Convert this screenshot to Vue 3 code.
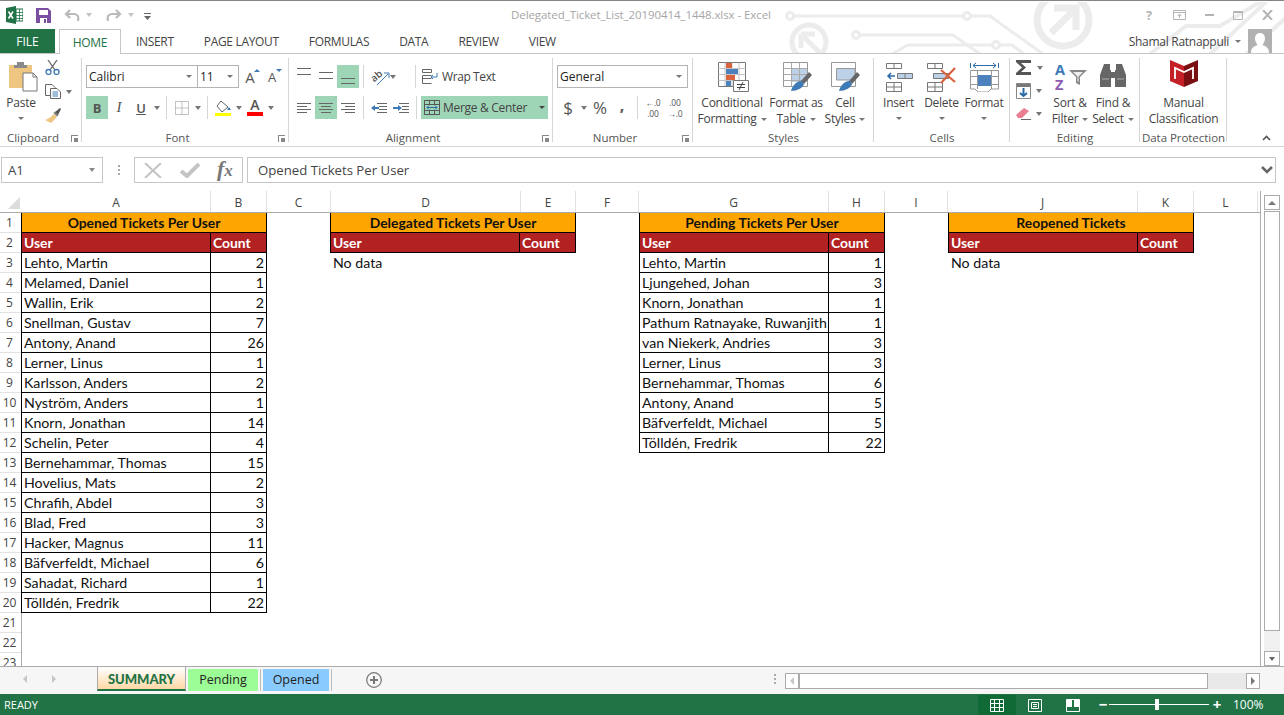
<script setup>
const tabs = ['INSERT', 'PAGE LAYOUT', 'FORMULAS', 'DATA', 'REVIEW', 'VIEW']
const columns = [
  ['A', 189], ['B', 56], ['C', 64], ['D', 190], ['E', 55], ['F', 63],
  ['G', 190], ['H', 56], ['I', 63], ['J', 190], ['K', 56], ['L', 64],
]
const rowNums = Array.from({ length: 23 }, (_, i) => i + 1)

// les quatre tableaux de la feuille
const tables = [
  {
    title: 'Opened Tickets Per User',
    rows: [
      ['Lehto, Martin', 2], ['Melamed, Daniel', 1], ['Wallin, Erik', 2], ['Snellman, Gustav', 7],
      ['Antony, Anand', 26], ['Lerner, Linus', 1], ['Karlsson, Anders', 2], ['Nyström, Anders', 1],
      ['Knorn, Jonathan', 14], ['Schelin, Peter', 4], ['Bernehammar, Thomas', 15], ['Hovelius, Mats', 2],
      ['Chrafih, Abdel', 3], ['Blad, Fred', 3], ['Hacker, Magnus', 11], ['Bäfverfeldt, Michael', 6],
      ['Sahadat, Richard', 1], ['Tölldén, Fredrik', 22],
    ],
  },
  { title: 'Delegated Tickets Per User', rows: [] },
  {
    title: 'Pending Tickets Per User',
    rows: [
      ['Lehto, Martin', 1], ['Ljungehed, Johan', 3], ['Knorn, Jonathan', 1],
      ['Pathum Ratnayake, Ruwanjith', 1], ['van Niekerk, Andries', 3], ['Lerner, Linus', 3],
      ['Bernehammar, Thomas', 6], ['Antony, Anand', 5], ['Bäfverfeldt, Michael', 5], ['Tölldén, Fredrik', 22],
    ],
  },
  { title: 'Reopened Tickets', rows: [] },
]
</script>

<template>
  <div class="excel">
    <header class="titlebar">
      <svg class="circuit" width="504" height="52" viewBox="780 2 504 52" fill="none" stroke="#ececec" stroke-width="3">
        <circle cx="790" cy="16" r="3.5" />
        <path d="M794 16H963M971 16H990L1043 54" />
        <circle cx="967" cy="16" r="3.5" />
        <circle cx="809" cy="42" r="17" stroke-width="5" />
        <path d="M801 34H815M801 34V48M801 34L820 53" stroke-width="5" />
        <circle cx="856" cy="35" r="3.5" />
        <path d="M860 35H953L980 54" />
        <path d="M892 54L908 45H992M1000 45H1012L1024 54" />
        <circle cx="996" cy="45" r="3.5" />
        <circle cx="1063" cy="20" r="26" stroke-width="7" />
        <path d="M1054 8H1076V30M1076 8L1051 33" stroke-width="7" />
        <path d="M1150 54L1186 26H1220L1270 -4M1210 54L1266 2M1246 54L1290 14" stroke-width="4" />
      </svg>
      <div class="qat">
        <svg width="17" height="18" viewBox="0 0 17 18">
          <path d="M0 2L10 0V18L0 16Z" fill="#217346" />
          <path d="M10 3H17V15H10Z" fill="#fff" stroke="#217346" />
          <path d="M10 6.5H17M10 9.5H17M10 12.5H17M13.5 3V15" stroke="#217346" stroke-width=".8" />
          <path d="M2.5 5.5L7 12.5M7 5.5L2.5 12.5" stroke="#fff" stroke-width="1.6" />
        </svg>
        <svg class="save" width="15" height="15" viewBox="0 0 15 15">
          <path d="M0 0H12L15 3V15H0Z" fill="#7a4ea0" />
          <path d="M3 2H12V7H3Z" fill="#fff" />
          <path d="M4 10H11V15H4Z" fill="#fff" />
          <path d="M8 11H10V15H8Z" fill="#7a4ea0" />
        </svg>
        <svg class="undo" width="16" height="13" viewBox="0 0 16 13" fill="none" stroke="#b9b9b9" stroke-width="2.2">
          <path d="M6 1L2 5L6 9M2 5H10C14 5 15 8 14 12" />
        </svg>
        <i class="caret light"></i>
        <svg class="redo" width="16" height="13" viewBox="0 0 16 13" fill="none" stroke="#b9b9b9" stroke-width="2.2">
          <path d="M10 1L14 5L10 9M14 5H6C2 5 1 8 2 12" />
        </svg>
        <i class="caret light"></i>
        <svg class="custom" width="7" height="7" viewBox="0 0 7 7"><path d="M0 0H7V1H0ZM0 3H7L3.5 7Z" fill="#666" /></svg>
      </div>
      <div class="doc-title">Delegated_Ticket_List_20190414_1448.xlsx - Excel</div>
      <div class="win-controls">
        <span class="help">?</span>
        <svg width="13" height="10" viewBox="0 0 13 10" fill="none" stroke="#b4b4b4"><path d="M.5.5H12.5V9.5H.5ZM.5 2.5H12.5M6.5 8V4M4.5 6L6.5 4L8.5 6" /></svg>
        <svg class="mini" width="9" height="2" viewBox="0 0 9 2"><path d="M0 0H9V2H0Z" fill="#b4b4b4" /></svg>
        <svg width="10" height="9" viewBox="0 0 10 9" fill="none" stroke="#b4b4b4"><path d="M.5.5H9.5V8.5H.5ZM.5 1.5H9.5" /></svg>
        <svg width="11" height="10" viewBox="0 0 11 10" stroke="#b4b4b4" stroke-width="2"><path d="M1 0L10 10M10 0L1 10" /></svg>
      </div>
    </header>

    <nav class="tabstrip">
      <div class="file">FILE</div>
      <div class="tab active">HOME</div>
      <div v-for="t in tabs" :key="t" class="tab">{{ t }}</div>
      <div class="user">
        <span>Shamal Ratnappuli</span>
        <i class="caret"></i>
        <svg class="avatar" width="24" height="24" viewBox="0 0 24 24">
          <path d="M0 0H24V24H0Z" fill="#b1b1b1" />
          <path d="M12 4C15 4 17 6 17 10C17 12.500 15 15 14.500 16C17 17 21 18 21 24H3C3 18 7 17 9.500 16C9 15 7 12.500 7 10C7 6 9 4 12 4Z" fill="#fff" />
        </svg>
      </div>
    </nav>

    <section class="ribbon">
      <div class="group clipboard">
        <div class="group-body">
          <div class="large paste">
            <svg width="30" height="31" viewBox="0 0 30 31">
              <path d="M1 4H24V27H1Z" fill="#eec681" />
              <path d="M9 1H16V4H19V7H6V4H9Z" fill="#8a8a8a" />
              <path d="M15 12H25L29 16V30H15Z" fill="#fff" stroke="#777" />
              <path d="M25 12V16H29" fill="none" stroke="#777" />
            </svg>
            <span>Paste</span>
            <i class="caret"></i>
          </div>
          <div class="stack">
            <svg width="15" height="15" viewBox="0 0 15 15" fill="none">
              <path d="M3 0L10 10M12 0L5 10" stroke="#666" stroke-width="1.300" />
              <circle cx="3.500" cy="12" r="2.500" stroke="#3e7ab5" stroke-width="1.300" />
              <circle cx="11.500" cy="12" r="2.500" stroke="#3e7ab5" stroke-width="1.300" />
            </svg>
            <div class="with-caret">
              <svg width="16" height="15" viewBox="0 0 16 15" fill="#fff" stroke="#666">
                <path d="M.5.5H7L10 3.500V11.500H.5Z" />
                <path d="M5.500 4.500H12L15.500 8V14.500H5.500Z" />
                <path d="M7.500 8H13M7.500 10H13M7.500 12H13" stroke="#3e7ab5" />
              </svg>
              <i class="caret"></i>
            </div>
            <svg width="16" height="15" viewBox="0 0 16 15">
              <path d="M9 6L12 9L6 15L0 12Q4 11 9 6Z" fill="#eec681" />
              <path d="M10 4L15 0L16 1L13 7Z" fill="#555" />
              <path d="M8.500 5L10 3.500L13.500 7L12 8.500Z" fill="#777" />
            </svg>
          </div>
        </div>
        <div class="group-label">Clipboard<span class="launcher"></span></div>
      </div>

      <div class="group font">
        <div class="group-body rows">
          <div class="row">
            <div class="combo font-name"><span>Calibri</span><i class="caret"></i></div>
            <div class="combo font-size"><span>11</span><i class="caret"></i></div>
            <span class="btn grow-a">A<i class="up"></i></span>
            <span class="btn shrink-a">A<i class="down"></i></span>
          </div>
          <div class="row">
            <span class="btn on letter bold">B</span>
            <span class="btn letter italic">I</span>
            <span class="btn letter under">U</span>
            <i class="caret slot"></i>
            <span class="sep"></span>
            <span class="btn">
              <svg width="14" height="14" viewBox="0 0 14 14" fill="none" stroke="#8a8a8a" stroke-dasharray="1 1"><path d="M.5.5H13.500V13.500H.5ZM7 .5V13.500M.5 7H13.500" /></svg>
            </span>
            <i class="caret slot"></i>
            <span class="sep"></span>
            <span class="btn">
              <svg width="16" height="16" viewBox="0 0 16 16">
                <path d="M6 1L13 7L7 12L2 6Z" fill="#fff" stroke="#666" />
                <path d="M14 7L16 10H12Z" fill="#3e7ab5" />
                <path d="M0 13H16V16H0Z" fill="#ffff00" />
              </svg>
            </span>
            <i class="caret slot"></i>
            <span class="btn color-a">A<i></i></span>
            <i class="caret slot"></i>
          </div>
        </div>
        <div class="group-label">Font<span class="launcher"></span></div>
      </div>

      <div class="group alignment">
        <div class="group-body rows">
          <div class="row">
            <span class="btn"><svg width="14" height="23" viewBox="0 0 14 23"><path d="M0 3H14V4H0ZM0 9H14V10H0Z" fill="#666" /></svg></span>
            <span class="btn"><svg width="14" height="23" viewBox="0 0 14 23"><path d="M0 7H14V8H0ZM0 13H14V14H0Z" fill="#666" /></svg></span>
            <span class="btn on"><svg width="14" height="23" viewBox="0 0 14 23"><path d="M0 13H14V14H0ZM0 18H14V19H0Z" fill="#666" /></svg></span>
            <span class="sep"></span>
            <span class="btn orient">
              <svg width="22" height="20" viewBox="0 0 22 20" fill="none">
                <text x="3" y="13" transform="rotate(-40 8 10)" class="ab">ab</text>
                <path d="M9 18L20 7M16 6H21V11" stroke="#3e7ab5" />
              </svg>
            </span>
            <i class="caret"></i>
            <span class="sep far"></span>
            <div class="wide-btn wrap">
              <svg width="16" height="15" viewBox="0 0 16 15" fill="none" stroke="#666">
                <path d="M.5.5H9.500V3.500H.5ZM.5 6.500H9.500M.5 9.500H9.500M.5 6.500V14.500H9.500" />
                <path d="M15 4V8H9M11 6L9 8L11 10" stroke="#3e7ab5" />
              </svg>
              <span>Wrap Text</span>
            </div>
          </div>
          <div class="row">
            <span class="btn"><svg width="14" height="10" viewBox="0 0 14 10"><path d="M0 0H14V1H0ZM0 3H10V4H0ZM0 6H14V7H0ZM0 9H10V10H0Z" fill="#666" /></svg></span>
            <span class="btn on"><svg width="14" height="10" viewBox="0 0 14 10"><path d="M0 0H14V1H0ZM2 3H12V4H2ZM0 6H14V7H0ZM2 9H12V10H2Z" fill="#666" /></svg></span>
            <span class="btn"><svg width="14" height="10" viewBox="0 0 14 10"><path d="M0 0H14V1H0ZM4 3H14V4H4ZM0 6H14V7H0ZM4 9H14V10H4Z" fill="#666" /></svg></span>
            <span class="sep"></span>
            <span class="btn"><svg width="16" height="10" viewBox="0 0 16 10"><path d="M6 0H16V1H6ZM8 3H16V4H8ZM8 6H16V7H8ZM6 9H16V10H6Z" fill="#666" /><path d="M4 2L0 5L4 8V6H8V4H4Z" fill="#3e7ab5" /></svg></span>
            <span class="btn"><svg width="16" height="10" viewBox="0 0 16 10"><path d="M6 0H16V1H6ZM9 3H16V4H9ZM9 6H16V7H9ZM6 9H16V10H6Z" fill="#666" /><path d="M5 2L9 5L5 8V6H0V4H5Z" fill="#3e7ab5" /></svg></span>
            <span class="sep"></span>
            <div class="wide-btn merge on">
              <svg width="16" height="15" viewBox="0 0 16 15" fill="none" stroke="#555">
                <path d="M.5.5H15.500V14.500H.5ZM.5 4.500H15.500M.5 10.500H15.500M5.500.5V4.500M10.500.5V4.500M5.500 10.500V14.500M10.500 10.500V14.500" />
                <path d="M3 7.500H13M5 5.500L3 7.500L5 9.500M11 5.500L13 7.500L11 9.500" stroke="#2c6aa6" />
              </svg>
              <span>Merge &amp; Center</span>
              <i class="caret dark"></i>
            </div>
          </div>
        </div>
        <div class="group-label">Alignment<span class="launcher"></span></div>
      </div>

      <div class="group number">
        <div class="group-body rows">
          <div class="row">
            <div class="combo general"><span>General</span><i class="caret"></i></div>
          </div>
          <div class="row">
            <span class="btn sym dollar">$</span>
            <i class="caret slot"></i>
            <span class="btn sym percent">%</span>
            <span class="btn sym comma">,</span>
            <span class="sep"></span>
            <span class="btn dec"><b>←.0</b><b>.00</b></span>
            <span class="btn dec"><b>.00</b><b>→.0</b></span>
          </div>
        </div>
        <div class="group-label">Number<span class="launcher"></span></div>
      </div>

      <div class="group styles">
        <div class="group-body">
          <div class="large cond">
            <svg width="31" height="30" viewBox="0 0 31 30">
              <path d="M.5.5H27.500V24.500H.5Z" fill="#fff" stroke="#777" />
              <path d="M7 .5V24M14 .5V24M21 .5V24M.5 6.500H27.500M.5 12.500H27.500M.5 18.500H27.500" stroke="#c4c4c4" fill="none" />
              <path d="M8 1H14V6H8ZM8 13H17V18H8Z" fill="#d9623f" />
              <path d="M8 7H20V12H8ZM8 19H13V24H8Z" fill="#4b82bd" />
              <path d="M15.500 18.500H30.500V29.500H15.500Z" fill="#fff" stroke="#777" />
              <path d="M19 22.500H27M19 25.500H27M25 20L21 28" stroke="#444" fill="none" />
            </svg>
            <span>Conditional</span>
            <span>Formatting<i class="caret inline"></i></span>
          </div>
          <div class="large tbl">
            <svg width="30" height="30" viewBox="0 0 30 30">
              <path d="M.5.5H24.500V24.500H.5Z" fill="#fff" stroke="#999" />
              <path d="M8.500 6.500H24V20H8.500Z" fill="#bcd1e8" />
              <path d="M8.500.5V24M16.500.5V24M.5 6.500H24M.5 12.500H24M.5 18.500H24" stroke="#aaa" fill="none" />
              <path d="M18 19L26 10L29 13L21 22Z" fill="#666" />
              <path d="M8 29C9 24 14 18 19 19L21 22C20 26 14 29 8 29Z" fill="#3e7ab5" />
            </svg>
            <span>Format as</span>
            <span>Table<i class="caret inline"></i></span>
          </div>
          <div class="large cell">
            <svg width="30" height="30" viewBox="0 0 30 30">
              <path d="M.5.5H24.500V24.500H.5Z" fill="#fff" stroke="#999" />
              <path d="M5.500 6.500H24V18H5.500Z" fill="#bcd1e8" stroke="#999" />
              <path d="M18 19L26 10L29 13L21 22Z" fill="#666" />
              <path d="M8 29C9 24 14 18 19 19L21 22C20 26 14 29 8 29Z" fill="#3e7ab5" />
            </svg>
            <span>Cell</span>
            <span>Styles<i class="caret inline"></i></span>
          </div>
        </div>
        <div class="group-label">Styles</div>
      </div>

      <div class="group cells">
        <div class="group-body">
          <div class="large insert">
            <svg width="28" height="30" viewBox="0 0 28 30" fill="none" stroke="#777">
              <path d="M1.500 1.500H16.500V6.500H1.500ZM9 1.500V6.500M1.500 20.500H16.500V29.500H1.500ZM1.500 25H16.500M9 20.500V29.500" />
              <path d="M12.500 11.500H27.500V16.500H12.500ZM20 11.500V16.500" fill="#bcd1e8" />
              <path d="M10 14H3M6 11L3 14L6 17" stroke="#2c6aa6" stroke-width="1.500" />
            </svg>
            <span>Insert</span>
            <i class="caret"></i>
          </div>
          <div class="large delete">
            <svg width="31" height="30" viewBox="0 0 31 30" fill="none" stroke="#777">
              <path d="M1.500 1.500H16.500V6.500H1.500ZM9 1.500V6.500M1.500 20.500H16.500V29.500H1.500ZM1.500 25H16.500M9 20.500V29.500" />
              <path d="M7.500 11.500H22.500V16.500H7.500Z" fill="#bcd1e8" />
              <path d="M15 8L29 20M29 6L15 21" stroke="#d9623f" stroke-width="2.200" />
            </svg>
            <span>Delete</span>
            <i class="caret"></i>
          </div>
          <div class="large format">
            <svg width="29" height="30" viewBox="0 0 29 30" fill="none" stroke="#999">
              <path d="M.5 1V6M28.500 1V6M3 3.500H26M6 1L3 3.500L6 6M23 1L26 3.500L23 6" stroke="#2c6aa6" />
              <path d="M.5 8.500H28.500V27L21 27L18 30H8L5 27H.5Z" />
              <path d="M7.500 8.500V27M21.500 8.500V27M.5 14.500H28.500M.5 22.500H28.500" />
              <path d="M8 13H21V24H8Z" fill="#4b82bd" stroke="none" />
            </svg>
            <span>Format</span>
            <i class="caret"></i>
          </div>
        </div>
        <div class="group-label">Cells</div>
      </div>

      <div class="group editing">
        <div class="group-body">
          <div class="stack small">
            <div class="with-caret">
              <svg width="16" height="15" viewBox="0 0 16 15"><path d="M0 0H15V3H5L10 7.500L5 12H15V15H0V13L6 7.500L0 2Z" fill="#555" /></svg>
              <i class="caret"></i>
            </div>
            <div class="with-caret">
              <svg width="15" height="16" viewBox="0 0 15 16" fill="none"><path d="M.5.5H14.500V15.500H.5Z" fill="#fff" stroke="#888" /><path d="M1 1H14V4H1Z" fill="#777" /><path d="M7.500 5V13M4 10L7.500 13L11 10" stroke="#2c6aa6" stroke-width="2" /></svg>
              <i class="caret"></i>
            </div>
            <div class="with-caret">
              <svg width="15" height="13" viewBox="0 0 15 13"><path d="M0 8L8 1L13 4L6 11H2Z" fill="#ea7f92" /><path d="M5 12H15V13H5Z" fill="#666" /></svg>
              <i class="caret"></i>
            </div>
          </div>
          <div class="large sort">
            <div class="az">
              <span class="a-z"><b class="az-a">A</b><b class="az-z">Z</b></span>
              <svg width="18" height="16" viewBox="0 0 18 16"><path d="M0 0H18L11 7V15L7 13V7Z" fill="#888" /><path d="M4 2H14L9.500 6.500V12L8.500 11.500V6.500Z" fill="#eee" /></svg>
            </div>
            <span>Sort &amp;</span>
            <span>Filter<i class="caret inline"></i></span>
          </div>
          <div class="large find">
            <svg width="28" height="25" viewBox="0 0 28 25">
              <path d="M5 1H11V7H12V24H1V12ZM17 1H23V1L27 12V24H16V7H17ZM12 9H16V15H12Z" fill="#666" />
              <path d="M3 15H10V17H3ZM18 15H25V17H18Z" fill="#8a8a8a" />
            </svg>
            <span>Find &amp;</span>
            <span>Select<i class="caret inline"></i></span>
          </div>
        </div>
        <div class="group-label">Editing</div>
      </div>

      <div class="group data">
        <div class="group-body">
          <div class="large manual">
            <svg width="28" height="28" viewBox="0 0 28 28">
              <path d="M0 0L14 6V27L0 21Z" fill="#c41f26" />
              <path d="M28 0L14 6V27L28 21Z" fill="#7a0f12" />
              <path d="M5 19V8L14 12L23 8V19" fill="none" stroke="#fff" stroke-width="1.800" />
            </svg>
            <span>Manual</span>
            <span>Classification</span>
          </div>
        </div>
        <div class="group-label">Data Protection</div>
      </div>

      <svg class="collapse" width="9" height="6" viewBox="0 0 9 6" fill="none" stroke="#555" stroke-width="1.600"><path d="M1 5L4.500 1.500L8 5" /></svg>
    </section>

    <section class="formula">
      <div class="namebox"><span>A1</span><i class="caret big"></i></div>
      <div class="vdots"><i></i><i></i><i></i></div>
      <div class="fx-buttons">
        <svg width="18" height="15" viewBox="0 0 18 15" stroke="#c4c4c4" stroke-width="2" fill="none"><path d="M1 0L17 15M17 0L1 15" /></svg>
        <svg width="20" height="15" viewBox="0 0 20 15" stroke="#c4c4c4" stroke-width="4" fill="none"><path d="M1 8L7 13L19 1" /></svg>
        <span class="fx">f<em>x</em></span>
      </div>
      <div class="input">
        <span>Opened Tickets Per User</span>
        <svg width="12" height="8" viewBox="0 0 12 8" fill="none" stroke="#666" stroke-width="2.600"><path d="M1 1L6 6L11 1" /></svg>
      </div>
    </section>

    <section class="sheet">
      <div class="grid-pane">
        <div class="col-heads">
          <div class="corner"><i></i></div>
          <div v-for="c in columns" :key="c[0]" class="col-head" :style="{ width: c[1] + 'px' }">{{ c[0] }}</div>
        </div>
        <div class="cells-area">
          <div class="row-heads">
            <div v-for="n in rowNums" :key="n" class="row-head">{{ n }}</div>
          </div>
          <div class="tables">
            <div v-for="t in tables" :key="t.title" class="xl-table">
              <div class="t-title">{{ t.title }}</div>
              <div class="t-row t-header">
                <div class="c-user">User</div>
                <div class="c-count">Count</div>
              </div>
              <div v-for="r in t.rows" :key="r[0]" class="t-row">
                <div class="c-user">{{ r[0] }}</div>
                <div class="c-count num">{{ r[1] }}</div>
              </div>
              <div v-if="t.rows.length === 0" class="no-data">No data</div>
            </div>
          </div>
        </div>
      </div>
      <div class="vscroll">
        <div class="sb-btn"><i class="tri-up"></i></div>
        <div class="sb-thumb"></div>
        <div class="sb-track"></div>
        <div class="sb-btn"><i class="caret"></i></div>
      </div>
    </section>

    <section class="sheet-tabs">
      <div class="nav-arrows"><i class="tri-left"></i><i class="tri-right"></i></div>
      <div class="s-tab summary">SUMMARY</div>
      <div class="s-tab pending">Pending</div>
      <span class="tab-sep"></span>
      <div class="s-tab opened">Opened</div>
      <span class="tab-sep"></span>
      <svg class="add" width="16" height="16" viewBox="0 0 16 16" fill="none" stroke="#777">
        <circle cx="8" cy="8" r="7.300" stroke-width="1.200" />
        <path d="M8 4V12M4 8H12" stroke-width="2" />
      </svg>
      <div class="hdots"><i></i><i></i><i></i></div>
      <div class="hscroll">
        <div class="sb-btn h"><i class="tri-left dark"></i></div>
        <div class="h-thumb"></div>
        <div class="h-track"></div>
        <div class="sb-btn h"><i class="tri-right dark"></i></div>
      </div>
    </section>

    <footer class="status">
      <span class="ready">READY</span>
      <div class="views">
        <div class="view current">
          <svg width="14" height="13" viewBox="0 0 14 13" fill="none" stroke="#fff"><path d="M.5.5H13.500V12.500H.5ZM4.500.5V12.500M9.500.5V12.500M.5 4.500H13.500M.5 8.500H13.500" /></svg>
        </div>
        <div class="view">
          <svg width="14" height="13" viewBox="0 0 14 13" fill="none" stroke="#fff"><path d="M.5.5H13.500V12.500H.5ZM3.500 3.500H10.500V9.500H3.500ZM5 5.500H9M5 7.500H9" /></svg>
        </div>
        <div class="view">
          <svg width="14" height="13" viewBox="0 0 14 13"><path d="M.5.5H13.500V12.500H.5Z" fill="none" stroke="#fff" /><path d="M1 1H6V8H1ZM8 1H13V8H8Z" fill="#fff" /></svg>
        </div>
      </div>
      <div class="zoom">
        <span class="zm">−</span>
        <div class="slider"><i></i></div>
        <span class="zm plus">+</span>
      </div>
      <span class="percent-label">100%</span>
    </footer>
  </div>
</template>

<style scoped>
.excel {
  width: 1284px;
  height: 715px;
  display: flex;
  flex-direction: column;
  overflow: hidden;
  background: #fff;
  border-top: 1px solid #858585;
  box-sizing: border-box;
  font-family: "Open Sans", "Noto Sans", sans-serif;
  font-size: 12px;
  color: #444;
}
i, em, b { font-style: normal; font-weight: normal; }

.caret {
  display: inline-block;
  width: 0;
  height: 0;
  border-left: 3.500px solid transparent;
  border-right: 3.500px solid transparent;
  border-top: 4px solid #777;
}
.caret.light { border-top-color: #c4c4c4; }
.caret.dark { border-top-color: #444; }
.caret.inline { margin-left: 4px; vertical-align: 2px; border-left-width: 3px; border-right-width: 3px; border-top-width: 3px; }
.caret.slot { margin: 0 2px; align-self: center; }

/* barre de titre */
.titlebar {
  height: 28px;
  position: relative;
  display: flex;
  align-items: center;
}
.circuit { position: absolute; left: 780px; top: 1px; }
.qat {
  display: flex;
  align-items: center;
  margin-left: 6px;
  position: relative;
}
.save { margin-left: 13px; }
.undo { margin-left: 13px; }
.redo { margin-left: 14px; }
.qat .caret { margin-left: 6px; }
.custom { margin-left: 10px; margin-top: 2px; }
.doc-title {
  position: absolute;
  left: 511px;
  top: 6px;
  color: #a6a6a6;
  white-space: nowrap;
  font-size: 11.500px;
  letter-spacing: -.08px;
}
.win-controls {
  position: absolute;
  left: 1146px;
  top: 7px;
  display: flex;
  align-items: center;
  gap: 19px;
}
.help { font-weight: 700; font-size: 13px; color: #b4b4b4; line-height: 14px; width: 9px; margin-right: -1px; }

/* onglets */
.tabstrip {
  height: 25px;
  display: flex;
  border-bottom: 1px solid #c6c6c6;
  box-sizing: border-box;
  position: relative;
  font-size: 12px;
}
.file {
  width: 55px;
  height: 24px;
  margin-right: 4px;
  background: #217346;
  color: #fff;
  text-align: center;
  line-height: 25px;
}
.tab {
  height: 24px;
  padding: 0 15px;
  line-height: 25px;
  color: #444;
  letter-spacing: -.32px;
}
.tab.active {
  width: 62px;
  box-sizing: border-box;
  padding: 0;
  height: 25px;
  text-align: center;
  color: #217346;
  background: #fff;
  border: 1px solid #c6c6c6;
  border-bottom: none;
}
.user {
  margin-left: auto;
  display: flex;
  align-items: center;
  height: 24px;
  padding-right: 12px;
  position: relative;
  letter-spacing: -.28px;
}
.user .caret { margin: 0 7px 0 6px; border-left-width: 3px; border-right-width: 3px; border-top-width: 3px; }

/* ruban */
.ribbon {
  height: 93px;
  display: flex;
  box-sizing: border-box;
  border-bottom: 1px solid #d4d4d4;
  position: relative;
}
.group {
  position: relative;
  display: flex;
  flex-direction: column;
  height: 92px;
  box-sizing: border-box;
}
.group::after {
  content: "";
  position: absolute;
  right: 0;
  top: 4px;
  bottom: 4px;
  width: 1px;
  background: #d6d6d6;
}
.group-body { flex: 1; display: flex; min-height: 0; }
.group-label {
  height: 16px;
  line-height: 15px;
  text-align: center;
  font-size: 11.500px;
  color: #555;
  position: relative;
  white-space: nowrap;
}
.clipboard .group-label, .font .group-label, .alignment .group-label, .number .group-label { padding-right: 16px; }
.launcher {
  position: absolute;
  right: 4px;
  top: 5px;
  width: 7px;
  height: 7px;
  border-left: 1px solid #888;
  border-top: 1px solid #888;
  box-sizing: border-box;
}
.launcher::after {
  content: "";
  position: absolute;
  right: 0;
  bottom: 0;
  width: 4px;
  height: 4px;
  background: #888;
}
.clipboard { width: 82px; }
.font { width: 207px; }
.alignment { width: 264px; }
.number { width: 140px; }
.styles { width: 181px; }
.cells { width: 136px; }
.editing { width: 130px; }
.data { width: 87px; }

.rows {
  flex-direction: column;
  padding-top: 11px;
  gap: 8px;
}
.row {
  display: flex;
  align-items: stretch;
  height: 23px;
}
.font .rows { padding-left: 4px; }
.alignment .rows { padding-left: 4px; }
.number .rows { padding-left: 4px; }

.btn {
  width: 22px;
  height: 23px;
  display: flex;
  align-items: center;
  justify-content: center;
  flex: none;
  position: relative;
  color: #555;
}
.on { background: #9fd5b7; }
.sep { width: 1px; margin: 0 4px; background: #d6d6d6; flex: none; }
.sep.far { margin-left: 19px; }
.letter { font-family: "Liberation Serif", serif; font-size: 14px; }
.bold { font-family: "Open Sans", sans-serif; font-weight: 700; font-size: 13px; }
.italic { font-style: italic; font-size: 15px; }
.under { font-family: "Open Sans", sans-serif; font-weight: 600; font-size: 13px; text-decoration: underline; }

.combo {
  height: 23px;
  border: 1px solid #b4b4b4;
  box-sizing: border-box;
  display: flex;
  align-items: center;
  justify-content: space-between;
  padding: 0 5px 0 2px;
  color: #222;
  background: #fff;
  font-size: 12px;
}
.combo .caret { border-left-width: 3px; border-right-width: 3px; border-top-width: 3px; }
.font-name { width: 112px; }
.font-size { width: 42px; margin-left: -1px; }
.general { width: 131px; }
.grow-a, .shrink-a { font-size: 15px; width: 22px; color: #555; }
.shrink-a { font-size: 13px; }
.up, .down {
  position: absolute;
  right: 1px;
  top: 4px;
  border-left: 3px solid transparent;
  border-right: 3px solid transparent;
}
.up { border-bottom: 3px solid #3e7ab5; }
.down { border-top: 3px solid #3e7ab5; }
.color-a {
  font-weight: 600;
  font-size: 14px;
  line-height: 14px;
  padding-bottom: 5px;
  box-sizing: border-box;
}
.color-a i {
  position: absolute;
  left: 3px;
  right: 3px;
  bottom: 3px;
  height: 4px;
  background: #f00;
}
.orient + .caret { align-self: center; }
.orient svg { overflow: visible; }
.ab { font-size: 10px; font-weight: 600; fill: #555; }

.wide-btn {
  display: flex;
  align-items: center;
  color: #444;
  white-space: nowrap;
}
.wrap { gap: 4px; letter-spacing: -.4px; }
.wrap svg { margin-left: 2px; }
.merge { width: 127px; gap: 3px; padding-left: 3px; box-sizing: border-box; letter-spacing: -.3px; }
.merge .caret { margin-left: 9px; border-left-width: 3px; border-right-width: 3px; border-top-width: 3px; }

.sym { font-size: 16px; color: #555; }
.dollar { font-size: 17px; }
.percent { font-size: 17px; }
.comma { font-weight: 700; padding-bottom: 6px; box-sizing: border-box; }
.dec {
  flex-direction: column;
  font-size: 8.500px;
  line-height: 11px;
  letter-spacing: -.2px;
}
.dec b { white-space: nowrap; }

.large {
  display: flex;
  flex-direction: column;
  align-items: center;
  padding-top: 8px;
  line-height: 16px;
  white-space: nowrap;
  letter-spacing: -.25px;
}
.large svg { height: 30px; margin-bottom: 3px; flex: none; }
.large > .caret { margin-top: 6px; border-left-width: 3px; border-right-width: 3px; border-top-width: 3px; }
.paste { width: 42px; padding-top: 7px; }
.paste svg { margin-left: 3px; height: 31px; margin-bottom: 0; }
.paste span { margin-top: 3px; }

.stack {
  display: flex;
  flex-direction: column;
  gap: 9px;
  padding-top: 6px;
  margin-left: 3px;
}
.stack.small { margin-left: 6px; gap: 8px; width: 33px; }
.with-caret { display: flex; align-items: center; gap: 5px; }

.styles .group-body { padding-left: 6px; }
.cond { width: 66px; }
.cond svg { margin-left: 2px; }
.tbl { width: 58px; margin-left: 2px; }
.tbl svg { margin-left: 4px; }
.cell { width: 40px; }
.cell svg { margin-left: 2px; }
.cells .group-body { padding-left: 3px; }
.insert { width: 43px; }
.delete { width: 43px; }
.format { width: 42px; }
.sort { width: 42px; padding-top: 6px; }
.find { width: 44px; }
.az { display: flex; align-items: flex-start; height: 35px; margin-left: 2px; }
.a-z { display: flex; flex-direction: column; font-size: 14.500px; line-height: 15px; width: 14px; margin-top: 2px; }
.az-a { color: #3e7ab5; font-weight: 700; }
.az-z { color: #8e5cb0; font-weight: 700; }
.az svg { height: 16px; margin-top: 10px; margin-bottom: 0; }
.find svg { height: 25px; margin: 1px 0 7px; }
.manual { width: 87px; padding-top: 6px; }
.manual svg { height: 28px; margin-bottom: 7px; }
.data .group-label { font-size: 11.500px; letter-spacing: -.05px; }
.collapse { margin: 81px 0 0 35px; flex: none; }

/* barre de formule */
.formula {
  height: 44px;
  box-sizing: border-box;
  padding: 10px 8px 8px 1px;
  display: flex;
  align-items: stretch;
  font-size: 13.200px;
}
.namebox {
  width: 102px;
  border: 1px solid #c6c6c6;
  box-sizing: border-box;
  display: flex;
  align-items: center;
  justify-content: space-between;
  padding: 0 7px 0 6px;
  color: #444;
}
.caret.big { border-top-color: #888; }
.vdots {
  width: 31px;
  display: flex;
  flex-direction: column;
  justify-content: center;
  align-items: center;
  gap: 2px;
}
.vdots i, .hdots i { width: 2px; height: 2px; background: #aaa; }
.fx-buttons {
  width: 109px;
  border: 1px solid #c6c6c6;
  box-sizing: border-box;
  display: flex;
  align-items: center;
  padding-left: 9px;
  gap: 18px;
}
.fx {
  font-family: "Liberation Serif", serif;
  font-style: italic;
  font-weight: 700;
  font-size: 22px;
  line-height: 22px;
  color: #777;
  margin-left: -1px;
  letter-spacing: 0;
}
.fx em { font-size: 17px; font-style: italic; font-weight: 700; }
.input {
  flex: 1;
  margin-left: 4px;
  border: 1px solid #c6c6c6;
  box-sizing: border-box;
  display: flex;
  align-items: center;
  justify-content: space-between;
  padding: 0 2px 0 10px;
  color: #444;
}

/* feuille */
.sheet {
  height: 476px;
  display: flex;
  border-bottom: 1px solid #ababab;
  box-sizing: border-box;
}
.grid-pane {
  width: 1261px;
  border-right: 1px solid #ababab;
  box-sizing: border-box;
  display: flex;
  flex-direction: column;
  overflow: hidden;
}
.col-heads {
  height: 22px;
  flex: none;
  display: flex;
  border-bottom: 1px solid #ababab;
  box-sizing: border-box;
}
.corner {
  width: 22px;
  flex: none;
  position: relative;
}
.corner i {
  position: absolute;
  right: 2px;
  bottom: 3px;
  width: 0;
  height: 0;
  border-left: 12px solid transparent;
  border-bottom: 12px solid #dcdcdc;
}
.col-head {
  flex: none;
  box-sizing: border-box;
  border-right: 1px solid #e1e1e1;
  text-align: center;
  line-height: 23px;
  color: #444;
}
.cells-area { flex: 1; display: flex; min-height: 0; }
.row-heads {
  width: 22px;
  flex: none;
  border-right: 1px solid #ababab;
  box-sizing: border-box;
}
.row-head {
  height: 20px;
  box-sizing: border-box;
  border-bottom: 1px solid #e1e1e1;
  text-align: center;
  line-height: 20px;
  color: #444;
  padding-right: 2px;
}
.tables {
  display: flex;
  gap: 63px;
  margin-left: -1px;
  align-items: flex-start;
  font-family: Lato, "Liberation Sans", sans-serif;
  font-size: 14.200px;
  color: #111;
}
.xl-table {
  width: 246px;
  box-sizing: border-box;
}
.t-title {
  height: 20px;
  box-sizing: border-box;
  background: #ffa500;
  border: 1px solid #000;
  border-top: none;
  text-align: center;
  font-weight: 700;
  font-size: 13.900px;
  line-height: 20px;
  color: #111;
}
.t-row {
  height: 20px;
  display: flex;
  box-sizing: border-box;
  border: 1px solid #000;
  border-top: none;
  line-height: 20px;
}
.t-header {
  background: #b22222;
  color: #fff;
  font-weight: 700;
  font-size: 13.900px;
}
.c-user {
  width: 189px;
  flex: none;
  box-sizing: border-box;
  border-right: 1px solid #000;
  padding-left: 2px;
  white-space: nowrap;
  overflow: hidden;
}
.c-count {
  flex: 1;
  padding-left: 2px;
}
.num { text-align: right; padding: 0 2px 0 0; }
.no-data { height: 20px; line-height: 20px; padding-left: 3px; }

.vscroll {
  width: 16px;
  margin-left: 3px;
  padding-top: 4px;
  display: flex;
  flex-direction: column;
}
.sb-btn {
  height: 15px;
  flex: none;
  border: 1px solid #ababab;
  box-sizing: border-box;
  background: #fff;
  display: flex;
  align-items: center;
  justify-content: center;
}
.sb-btn .caret { border-top-color: #666; }
.tri-up {
  width: 0;
  height: 0;
  border-left: 4px solid transparent;
  border-right: 4px solid transparent;
  border-bottom: 4px solid #777;
}
.sb-thumb {
  height: 420px;
  flex: none;
  margin-top: 1px;
  border: 1px solid #ababab;
  box-sizing: border-box;
  background: #fff;
}
.sb-track { flex: 1; background: #f1f1f1; }

/* onglets de feuilles */
.sheet-tabs {
  height: 27px;
  flex: none;
  display: flex;
  background: #f6f6f6;
  position: relative;
}
.nav-arrows {
  width: 97px;
  flex: none;
  display: flex;
  align-items: center;
  padding-left: 23px;
  box-sizing: border-box;
  gap: 25px;
  margin-bottom: 4px;
}
.tri-left, .tri-right {
  width: 0;
  height: 0;
  border-top: 4px solid transparent;
  border-bottom: 4px solid transparent;
}
.tri-left { border-right: 4px solid #c6c6c6; }
.tri-right { border-left: 4px solid #c6c6c6; }
.tri-right.dark { border-left-color: #777; }
.s-tab {
  font-size: 12.500px;
  text-align: center;
  color: #222;
  box-sizing: border-box;
}
.summary {
  width: 89px;
  height: 25px;
  margin-top: -1px;
  border: 1px solid #ababab;
  border-bottom: 2px solid #217346;
  background: linear-gradient(#fff, #ffd8a6);
  font-family: Lato, "Open Sans", sans-serif;
  font-weight: 900;
  font-size: 13px;
  color: #217346;
  line-height: 24px;
}
.pending {
  width: 70px;
  height: 22px;
  margin: 2px 0 0 2px;
  background: #9cfc96;
  line-height: 21px;
}
.opened {
  width: 66px;
  height: 22px;
  margin-top: 2px;
  background: #8acbff;
  line-height: 21px;
}
.tab-sep {
  width: 1px;
  height: 22px;
  margin: 2px 2px 0;
  background: #bbb;
  flex: none;
}
.add { margin: 5px 0 0 32px; }
.hdots {
  display: flex;
  flex-direction: column;
  justify-content: center;
  gap: 2px;
  margin-bottom: 3px;
  padding-left: 392px;
}
.hscroll {
  width: 475px;
  height: 16px;
  margin: 6px 0 0 9px;
  display: flex;
  flex: none;
}
.sb-btn.h { width: 14px; height: 16px; }
.h-thumb {
  width: 409px;
  border: 1px solid #ababab;
  box-sizing: border-box;
  background: #fff;
  flex: none;
}
.h-track { flex: 1; background: #e9e9e9; }

/* barre d'état */
.status {
  height: 21px;
  flex: none;
  background: #217346;
  color: #fff;
  display: flex;
  align-items: center;
  font-size: 11px;
}
.ready { margin-left: 4px; }
.views {
  margin-left: 940px;
  display: flex;
  height: 20px;
  align-self: flex-end;
}
.view {
  width: 38px;
  display: flex;
  align-items: center;
  justify-content: center;
}
.view.current { background: #0f6a36; }
.zoom {
  display: flex;
  align-items: center;
  margin-left: 6px;
  width: 124px;
}
.zm { width: 10px; font-weight: 700; font-size: 15px; line-height: 15px; text-align: center; flex: none; }
.slider {
  width: 100px;
  margin: 0 3px 0 1px;
  height: 1px;
  background: #fff;
  position: relative;
  flex: none;
}
.slider i {
  position: absolute;
  left: 46px;
  top: -5px;
  width: 4px;
  height: 11px;
  background: #fff;
}
.percent-label { margin-left: 11px; font-size: 12px; }
</style>
